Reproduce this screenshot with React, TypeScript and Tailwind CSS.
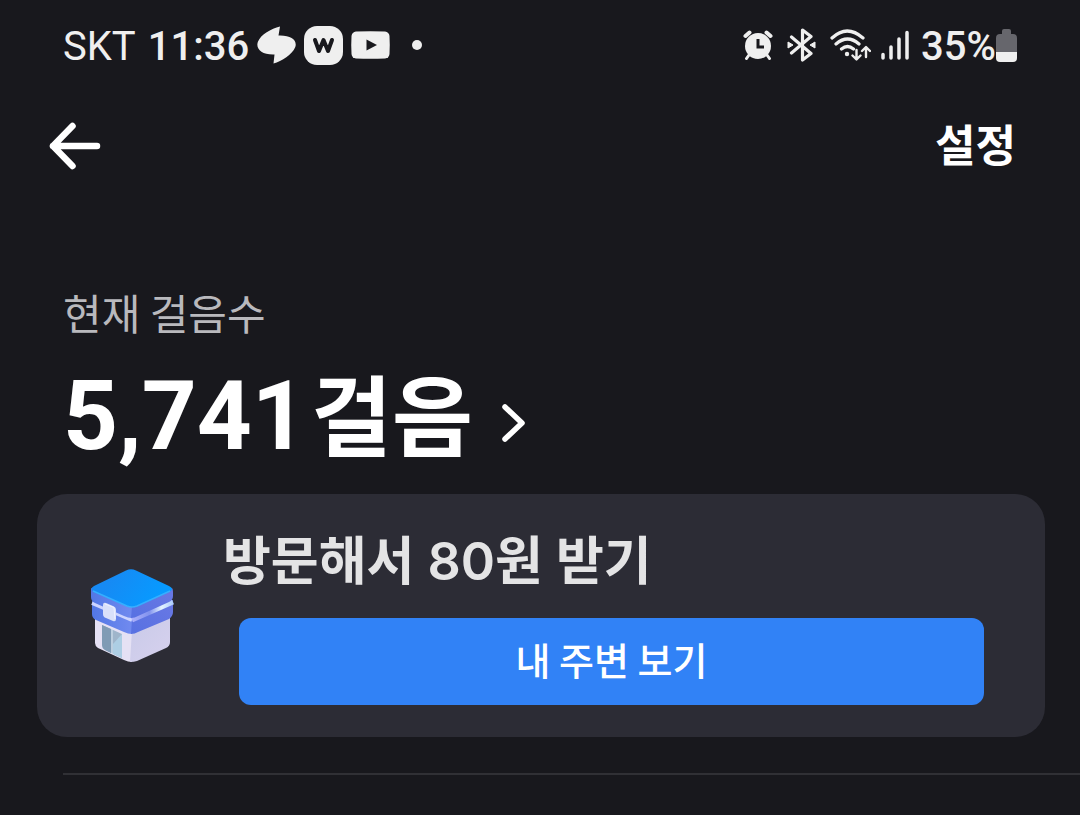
import type { ReactNode } from "react";

function StatusIcon({
  width,
  height,
  label,
  children,
}: {
  width: number;
  height: number;
  label: string;
  children: ReactNode;
}) {
  return (
    <svg
      width={width}
      height={height}
      viewBox={`0 0 ${width} ${height}`}
      role="img"
      aria-label={label}
      className="shrink-0"
      fill="none"
    >
      {children}
    </svg>
  );
}

function StatusBar() {
  return (
    <div className="flex h-[90px] items-center justify-between px-[63px] text-[#efefef]">
      <div className="flex items-center">
        <span className="pt-1 font-['Roboto',sans-serif] text-[40px] leading-[48px]">
          SKT
        </span>
        <span className="ml-3 pt-1 font-['Roboto',sans-serif] text-[40px] leading-[48px] font-medium">
          11:36
        </span>
        <div className="ml-2 flex items-center gap-2">
          <StatusIcon width={39} height={38} label="앱 알림">
            <path
              d="M23 0.5C14 3 4 8 0.8 16C-1.5 23 5 29 17.500 28.500L16.500 37.500C25 35 35 29 38.300 21C40.500 14 34 9 21.500 9.500Z"
              fill="#efefef"
            />
          </StatusIcon>
          <StatusIcon width={39} height={39} label="W">
            <rect width="39" height="39" rx="13" fill="#efefef" />
            <path
              d="M11 14L15 25L19.500 14L24 25L28 14"
              stroke="#18181d"
              strokeWidth="4"
              strokeLinecap="round"
              strokeLinejoin="round"
            />
          </StatusIcon>
          <StatusIcon width={39} height={28} label="YouTube">
            <path
              d="M5 0.5Q19.500 0 34 0.500Q38 1 38.500 5Q39 14 38.500 23Q38 27 34 27.500Q19.500 28 5 27.500Q1 27 0.500 23Q0 14 0.500 5Q1 1 5 0.500Z"
              fill="#efefef"
            />
            <path d="M15.500 8.500L26 14L15.500 19.500Z" fill="#18181d" />
          </StatusIcon>
          <span className="ml-3.5 size-2.5 rounded-full bg-[#efefef]" />
        </div>
      </div>

      <div className="flex items-center">
        <div className="flex items-center gap-3.5">
          <StatusIcon width={30} height={30} label="알람">
            <circle cx="15" cy="16" r="13" fill="#efefef" />
            <path
              d="M2.500 6L6.500 2.500M27.500 6L23.500 2.500"
              stroke="#efefef"
              strokeWidth="4"
              strokeLinecap="round"
            />
            <path
              d="M6 25L3.500 28.500M24 25L26.500 28.500"
              stroke="#efefef"
              strokeWidth="3"
              strokeLinecap="round"
            />
            <path d="M15 9V17H21" stroke="#18181d" strokeWidth="3" />
          </StatusIcon>
          <StatusIcon width={29} height={34} label="블루투스">
            <path
              d="M4.500 9L24 25.500L15.500 32V2L24 8.500L4.500 25"
              stroke="#efefef"
              strokeWidth="3.200"
              strokeLinecap="round"
              strokeLinejoin="round"
            />
            <path
              d="M1 14L6 17L1 20ZM28 14L23 17L28 20Z"
              fill="#efefef"
              stroke="#efefef"
              strokeLinejoin="round"
            />
          </StatusIcon>
          <StatusIcon width={41} height={32} label="Wi-Fi">
            <path
              d="M2 9Q17 -5 33 9M6 15Q17.500 5 29 15M11.500 20Q17.500 15 23.500 20"
              stroke="#efefef"
              strokeWidth="3.200"
              strokeLinecap="round"
            />
            <circle cx="17" cy="25" r="2.200" fill="#efefef" />
            <path
              d="M26.500 21V30M22.500 26.500L26.500 30.500L30.500 26.500M36 28V19M32 22L36 18L40 22"
              stroke="#efefef"
              strokeWidth="2.400"
              strokeLinecap="round"
              strokeLinejoin="round"
            />
          </StatusIcon>
        </div>
        <div className="ml-2.5 flex items-center">
          <StatusIcon width={28} height={30} label="신호 세기">
            <path
              d="M2 24.500V28M10 17V28M18 9V28M26 2.500V28"
              stroke="#efefef"
              strokeWidth="3.500"
              strokeLinecap="round"
            />
          </StatusIcon>
          <span className="ml-3 pt-1 font-['Roboto',sans-serif] text-[40px] leading-[48px] font-medium">
            35%
          </span>
          <StatusIcon width={21} height={33} label="배터리">
            <path
              d="M6 5V2Q6 0 8 0H13Q15 0 15 2V5H17Q21 5 21 9V23H0V9Q0 5 4 5Z"
              fill="#66666c"
            />
            <path d="M0 23H21V29Q21 33 17 33H4Q0 33 0 29Z" fill="#efefef" />
          </StatusIcon>
        </div>
      </div>
    </div>
  );
}

function StoreIcon() {
  return (
    <svg
      width="84"
      height="96"
      viewBox="0 0 84 96"
      fill="none"
      aria-hidden="true"
      className="shrink-0"
    >
      <defs>
        <linearGradient id="roof" x1="20" y1="10" x2="60" y2="38" gradientUnits="userSpaceOnUse">
          <stop stopColor="#168af4" />
          <stop offset="1" stopColor="#079aff" />
        </linearGradient>
        <linearGradient id="left" x1="0" y1="0" x2="1" y2="0">
          <stop stopColor="#5277e5" />
          <stop offset="1" stopColor="#718aef" />
        </linearGradient>
        <linearGradient id="right" x1="0" y1="1" x2="1" y2="0">
          <stop stopColor="#5771e2" />
          <stop offset="1" stopColor="#6978e4" />
        </linearGradient>
        <linearGradient id="wall" x1="0" y1="0" x2="1" y2="1">
          <stop stopColor="#c8cae8" />
          <stop offset="1" stopColor="#d7d1ee" />
        </linearGradient>
        <linearGradient id="band" x1="42" y1="0" x2="83" y2="0" gradientUnits="userSpaceOnUse">
          <stop stopColor="#a9aefa" />
          <stop offset="0.400" stopColor="#8293ee" />
          <stop offset="0.700" stopColor="#e3f4ff" />
          <stop offset="1" stopColor="#a9c9fd" />
        </linearGradient>
      </defs>
      {/* walls and door */}
      <path d="M4 47L41 62V94Q37 94 33 92L7 80Q4 78 4 75Z" fill="#e5e1f4" />
      <path d="M41 62L79 47V74Q79 78 75 80L46 93Q43 94 39 94Z" fill="url(#wall)" />
      <path d="M11 57L31 66V90L14 82Q11 80 11 77Z" fill="#9fb5cb" />
      <path d="M11 57L20 61V85L14 82Q11 80 11 77Z" fill="#7f9bb5" />
      <path d="M21 61V86" stroke="#d9e7f3" />
      <path d="M22 76L31 66V90L22 86Z" fill="#adcee4" />
      {/* lower and upper trim */}
      <path d="M1 33L41 50V66Q37 66 33 64L5 52Q1 50 1 46Z" fill="url(#left)" />
      <path d="M41 50L82 32V44Q82 48 78 51L47 64Q44 66 40 66Z" fill="url(#right)" />
      <path d="M1 35L41 52" stroke="#cdd4ff" strokeWidth="4" />
      <path d="M41 52L82 34" stroke="url(#band)" strokeWidth="5" />
      <path d="M0 20L41 38V50Q37 50 33 48L4 35Q0 33 0 29V21Z" fill="url(#left)" />
      <path d="M41 38L81 20Q82 21 82 24V28Q82 32 78 34L47 48Q44 50 40 50Z" fill="url(#right)" />
      <path
        d="M3 18L35 2.500Q40 0 45 2.500L78 18Q84 21 78 24L46 38Q41 40 36 38L3 24Q-2 21 3 18Z"
        fill="url(#roof)"
      />
      <path d="M2 23L36 38Q41 40 46 38L79 23" stroke="#35afff" strokeWidth="1.500" />
      <path
        d="M12 37Q12 34 15 35L22 38Q25 39 25 42V51Q25 54 22 53L15 50Q12 49 12 46Z"
        fill="#d9e0fa"
      />
      <path d="M14 36L23 39.500L24 51" stroke="#f0f1ff" />
    </svg>
  );
}

function VisitCard() {
  return (
    <section className="ml-[37px] mr-[35px] flex items-center rounded-[30px] bg-[#2c2c35] py-8 pr-[61px] pl-[54px]">
      <StoreIcon />
      <div className="ml-12 flex-1">
        <h2 className="pt-1 font-['Inter','Noto_Sans_CJK_KR',sans-serif] text-[52px] leading-[64px] font-semibold text-[#e4e4e5]">
          방문해서 80원 받기
        </h2>
        <div className="mt-6 pl-4">
          <button
            type="button"
            className="h-[87px] w-full rounded-xl bg-[#3182f6] pb-1.5 text-[38px] leading-[48px] font-medium text-white"
          >
            내 주변 보기
          </button>
        </div>
      </div>
    </section>
  );
}

export default function App() {
  return (
    <div className="min-h-screen bg-[#18181d] font-['Noto_Sans_CJK_KR',sans-serif] text-white">
      <StatusBar />

      <header className="flex h-[112px] items-center justify-between pl-12 pr-16">
        <button type="button" aria-label="뒤로">
          <svg width="54" height="48" viewBox="0 0 54 48" fill="none">
            <path
              d="M24.500 4L5 24L24.500 44M5 24H49"
              stroke="white"
              strokeWidth="6.500"
              strokeLinecap="round"
              strokeLinejoin="round"
            />
          </svg>
        </button>
        <button
          type="button"
          className="pb-1.5 text-[44px] leading-[56px] font-bold"
        >
          설정
        </button>
      </header>

      <main className="pt-20">
        <div className="px-[63px]">
          <p className="pt-0.5 text-[42px] leading-[56px] text-[#b9b9bd]">
            현재 걸음수
          </p>
          <button type="button" className="mt-4 flex h-[138px] items-center">
            <span className="flex items-baseline pb-6 font-bold">
              <span className="font-['Roboto',sans-serif] text-[96px] leading-[108px]">
                5,741
              </span>
              <span className="ml-1 text-[88px] leading-[108px]">걸음</span>
            </span>
            <svg
              width="26"
              height="44"
              viewBox="0 0 26 44"
              fill="none"
              aria-hidden="true"
              className="ml-7"
            >
              <path
                d="M4 4L21 20L4 36"
                stroke="white"
                strokeWidth="5.500"
                strokeLinecap="round"
                strokeLinejoin="round"
              />
            </svg>
          </button>
        </div>

        <VisitCard />
        <hr className="mt-9 ml-[63px] border-t-2 border-[#303035]" />
      </main>
    </div>
  );
}
